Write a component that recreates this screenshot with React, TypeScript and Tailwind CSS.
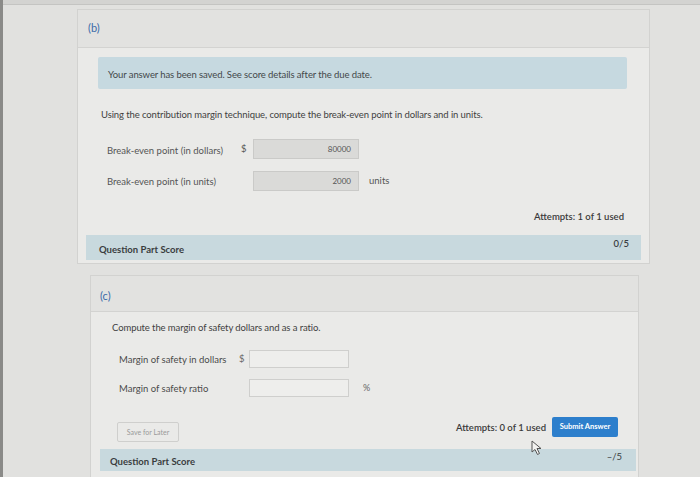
import React from "react";

export default function App() {
  return (
    <div
      className="relative w-[700px] h-[477px] overflow-hidden bg-[#e1e1df] border-l-[3px] border-[#8a8a88] text-[#3d3d3d]"
      style={{ fontFamily: "Lato, 'Open Sans', sans-serif" }}
    >
      <div className="h-[5px] bg-[#d3d3d1] border-b border-[#c4c4c2]" />
      {/* Card (b) */}
      <div className="ml-[74px] mt-[4px] w-[573px] border border-[#d2d2d0] bg-[#eaeae8]">
        <div className="h-[38px] bg-[#e2e2e0] border-b border-[#d3d3d1] flex items-center pl-[10px]">
          <span className="text-[11px] text-[#3a6aa8]">(b)</span>
        </div>
        <div className="pt-[9px]">
          <div className="ml-[20px] mr-[22px] h-[32px] bg-[#c6d9e0] rounded-[2px] flex items-center pl-[10px] pt-[4px]">
            <span className="text-[9.5px] text-[#44484a] tracking-[-0.1px]">
              Your answer has been saved. See score details after the due date.
            </span>
          </div>
          <div className="mt-[19px] pl-[23px] text-[9.5px] leading-[14px] text-[#3f3f3f] tracking-[-0.1px]">
            Using the contribution margin technique, compute the break-even point in dollars and in units.
          </div>
          <div className="mt-[17px] pl-[29px] flex items-center">
            <span className="w-[134px] text-[9.5px] text-[#555] pt-[5px]">Break-even point (in dollars)</span>
            <span className="w-[12px] text-[9.5px] text-[#555]">$</span>
            <div className="w-[106px] h-[20px] bg-[#dadad8] border border-[#cacac8] flex items-center justify-end pr-[7px] text-[8px] text-[#555]">
              80000
            </div>
          </div>
          <div className="mt-[12px] pl-[29px] flex items-center">
            <span className="w-[146px] text-[9.5px] text-[#555] pt-[3px]">Break-even point (in units)</span>
            <div className="w-[106px] h-[20px] bg-[#dadad8] border border-[#cacac8] flex items-center justify-end pr-[7px] text-[8px] text-[#555]">
              2000
            </div>
            <span className="ml-[10px] text-[9.5px] text-[#555]">units</span>
          </div>
          <div className="mt-[20px] pr-[25px] flex justify-end text-[9.5px] leading-[12px] font-semibold text-[#3a3a3a]">
            Attempts: 1 of 1 used
          </div>
          <div className="mt-[12px] mx-[8px] mb-[3px] h-[25px] bg-[#c8d9de] flex justify-between pl-[13px] pr-[12px]">
            <span className="self-end pb-[3px] text-[9.5px] font-bold text-[#3a3d3e]">Question Part Score</span>
            <span className="self-start pt-[2px] text-[9.5px] font-semibold text-[#3a3d3e]">0/5</span>
          </div>
        </div>
      </div>

      {/* Card (c) */}
      <div className="ml-[87px] mt-[11px] w-[549px] h-[210px] border border-[#d2d2d0] bg-[#eaeae8]">
        <div className="h-[36px] bg-[#e2e2e0] border-b border-[#d3d3d1] flex items-center pl-[9px] pt-[6px]">
          <span className="text-[11px] text-[#3a6aa8]">(c)</span>
        </div>
        <div className="mt-[9px] pl-[21px] text-[9.5px] leading-[14px] text-[#3f3f3f] tracking-[-0.1px]">
          Compute the margin of safety dollars and as a ratio.
        </div>
        <div className="mt-[15px] pl-[28px] flex items-center">
          <span className="w-[120px] text-[9.5px] text-[#4a4a4a] pt-[3px]">Margin of safety in dollars</span>
          <span className="w-[10px] text-[9.5px] text-[#666]">$</span>
          <div className="w-[100px] h-[18px] bg-[#eeeeec] border border-[#cfcfcd]" />
        </div>
        <div className="mt-[11px] pl-[28px] flex items-center">
          <span className="w-[130px] text-[9.5px] text-[#4a4a4a] pt-[3px]">Margin of safety ratio</span>
          <div className="w-[100px] h-[18px] bg-[#eeeeec] border border-[#cfcfcd]" />
          <span className="ml-[14px] text-[9px] text-[#666]">%</span>
        </div>
        <div className="mt-[20px] flex items-start justify-between pl-[26px] pr-[20px]">
          <div className="mt-[5px] w-[62px] h-[20px] border border-[#cfcfcd] rounded-[2px] flex items-center justify-center text-[7px] text-[#9a9a9a]">
            Save for Later
          </div>
          <div className="flex items-center">
            <span className="text-[9.5px] font-semibold text-[#3a3a3a] mt-[2px]">Attempts: 0 of 1 used</span>
            <div className="ml-[6px] w-[66px] h-[20px] bg-[#2d7fcc] rounded-[2px] flex items-center justify-center text-[7.5px] font-bold text-white">
              Submit Answer
            </div>
          </div>
        </div>
        <div className="mt-[7px] ml-[9px] mr-[2px] h-[22px] bg-[#c8d9de] flex justify-between pl-[10px] pr-[14px]">
          <span className="self-end pb-[2px] text-[9.5px] font-bold text-[#3a3d3e]">Question Part Score</span>
          <span className="self-start pt-[1px] text-[9.5px] text-[#3a3d3e]">–/5</span>
        </div>
      </div>

      {/* mouse cursor */}
      <svg className="absolute left-[528px] top-[440px]" width="12" height="16" viewBox="0 0 12 16">
        <path d="M1 1 L1 12 L4 9.5 L6.5 14.5 L8.5 13.5 L6 8.5 L10 8.5 Z" fill="#f2f2f0" stroke="#555" strokeWidth="1" strokeLinejoin="round" />
      </svg>
    </div>
  );
}
